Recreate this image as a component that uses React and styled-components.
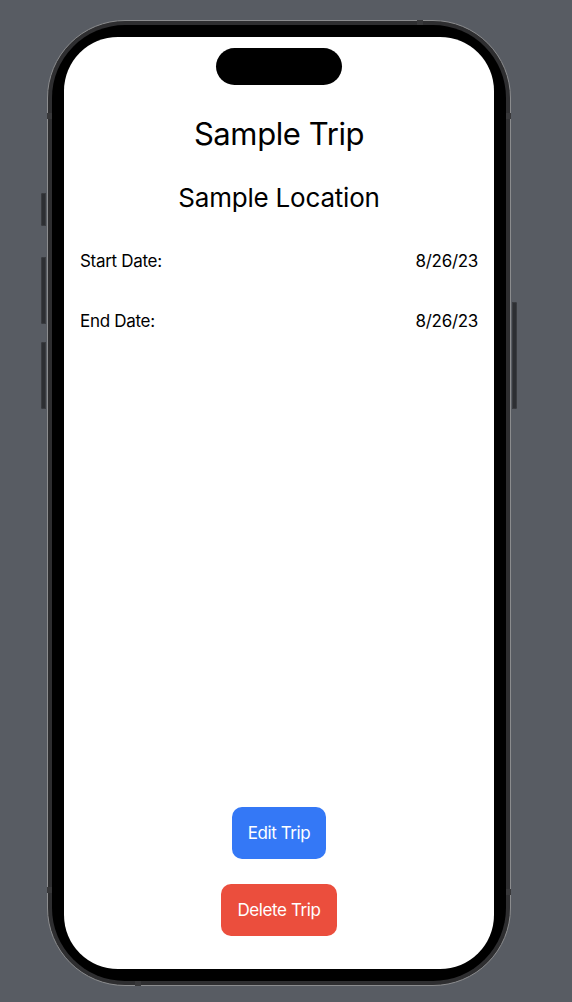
import React from "react";
import styled, { createGlobalStyle } from "styled-components";

const Global = createGlobalStyle`
  html, body {
    margin: 0;
    padding: 0;
    background: #585c63;
  }
  body {
    font-family: Inter, "Liberation Sans", Arial, sans-serif;
    -webkit-font-smoothing: antialiased;
  }
`;

const Stage = styled.div`
  width: 572px;
  height: 1002px;
  box-sizing: border-box;
  padding: 20px 0 0 47px;
  background: #585c63;
`;

const Device = styled.div`
  position: relative;
  width: 464px;
  height: 966px;
  box-sizing: border-box;
  border: 1px solid #8b8c8e;
  border-radius: 78px;
  padding: 4px;
  background: #2e2e30;
`;

const SideKey = styled.div`
  position: absolute;
  width: 5px;
  top: ${(p) => p.$top}px;
  height: ${(p) => p.$h}px;
  ${(p) => (p.$right ? "right: -7px;" : "left: -7px;")}
  background: #2d2f33;
  border-radius: ${(p) => (p.$right ? "0 2px 2px 0" : "2px 0 0 2px")};
  box-shadow: inset 0 0 0 1px #3a3c40;
`;

const Band = styled.div`
  position: absolute;
  background: #38383a;
  ${(p) => p.$pos}
`;

const Bezel = styled.div`
  width: 100%;
  height: 100%;
  box-sizing: border-box;
  background: #000;
  border-radius: 73px;
  padding: 12px;
`;

const Screen = styled.div`
  width: 100%;
  height: 100%;
  box-sizing: border-box;
  background: #fff;
  border-radius: 54px;
  display: flex;
  flex-direction: column;
  align-items: stretch;
  padding: 11px 16px 33px;
  overflow: hidden;
`;

const Island = styled.div`
  align-self: center;
  width: 126px;
  height: 37px;
  border-radius: 19px;
  background: #000;
  flex-shrink: 0;
`;

const Title = styled.h1`
  margin: ${(p) => p.$mt}px 0 0;
  font-weight: 400;
  font-size: ${(p) => p.$size}px;
  line-height: ${(p) => p.$lh}px;
  color: #000;
  text-align: center;
  letter-spacing: ${(p) => p.$ls || 0}px;
`;

const Rows = styled.div`
  display: flex;
  flex-direction: column;
  gap: 40px;
  margin-top: 37px;
`;

const Row = styled.div`
  display: flex;
  justify-content: space-between;
  align-items: center;
  height: 20px;
  font-size: 17px;
  line-height: 20px;
  color: #000;
  letter-spacing: -0.3px;
`;

const Spacer = styled.div`
  flex: 1;
`;

const Actions = styled.div`
  display: flex;
  flex-direction: column;
  align-items: center;
  gap: 25px;
`;

const ActionButton = styled.button`
  border: none;
  border-radius: 10px;
  height: 52px;
  padding: 0 16px;
  background: ${(p) => p.$bg};
  color: #fff;
  font-family: inherit;
  font-size: 17px;
  letter-spacing: -0.4px;
  cursor: pointer;
`;

export default function App() {
  return (
    <Stage>
      <Global />
      <Device>
        <SideKey $top={172} $h={33} />
        <SideKey $top={236} $h={67} />
        <SideKey $top={321} $h={67} />
        <SideKey $right $top={281} $h={107} />
        <Band $pos="top: -1px; left: 369px; width: 6px; height: 5px;" />
        <Band $pos="bottom: -1px; left: 87px; width: 6px; height: 5px;" />
        <Band $pos="left: -1px; top: 92px; width: 5px; height: 6px;" />
        <Band $pos="right: -1px; top: 92px; width: 5px; height: 6px;" />
        <Band $pos="left: -1px; bottom: 92px; width: 5px; height: 6px;" />
        <Band $pos="right: -1px; bottom: 90px; width: 5px; height: 6px;" />
        <Bezel>
          <Screen>
            <Island />
            <Title $mt={30} $size={31} $lh={38} $ls={-0.4}>
              Sample Trip
            </Title>
            <Title $mt={29} $size={26} $lh={32} $ls={-0.2}>
              Sample Location
            </Title>
            <Rows>
              <Row>
                <span>Start Date:</span>
                <span>8/26/23</span>
              </Row>
              <Row>
                <span>End Date:</span>
                <span>8/26/23</span>
              </Row>
            </Rows>
            <Spacer />
            <Actions>
              <ActionButton $bg="#3478f6">Edit Trip</ActionButton>
              <ActionButton $bg="#eb4e3d">Delete Trip</ActionButton>
            </Actions>
          </Screen>
        </Bezel>
      </Device>
    </Stage>
  );
}
